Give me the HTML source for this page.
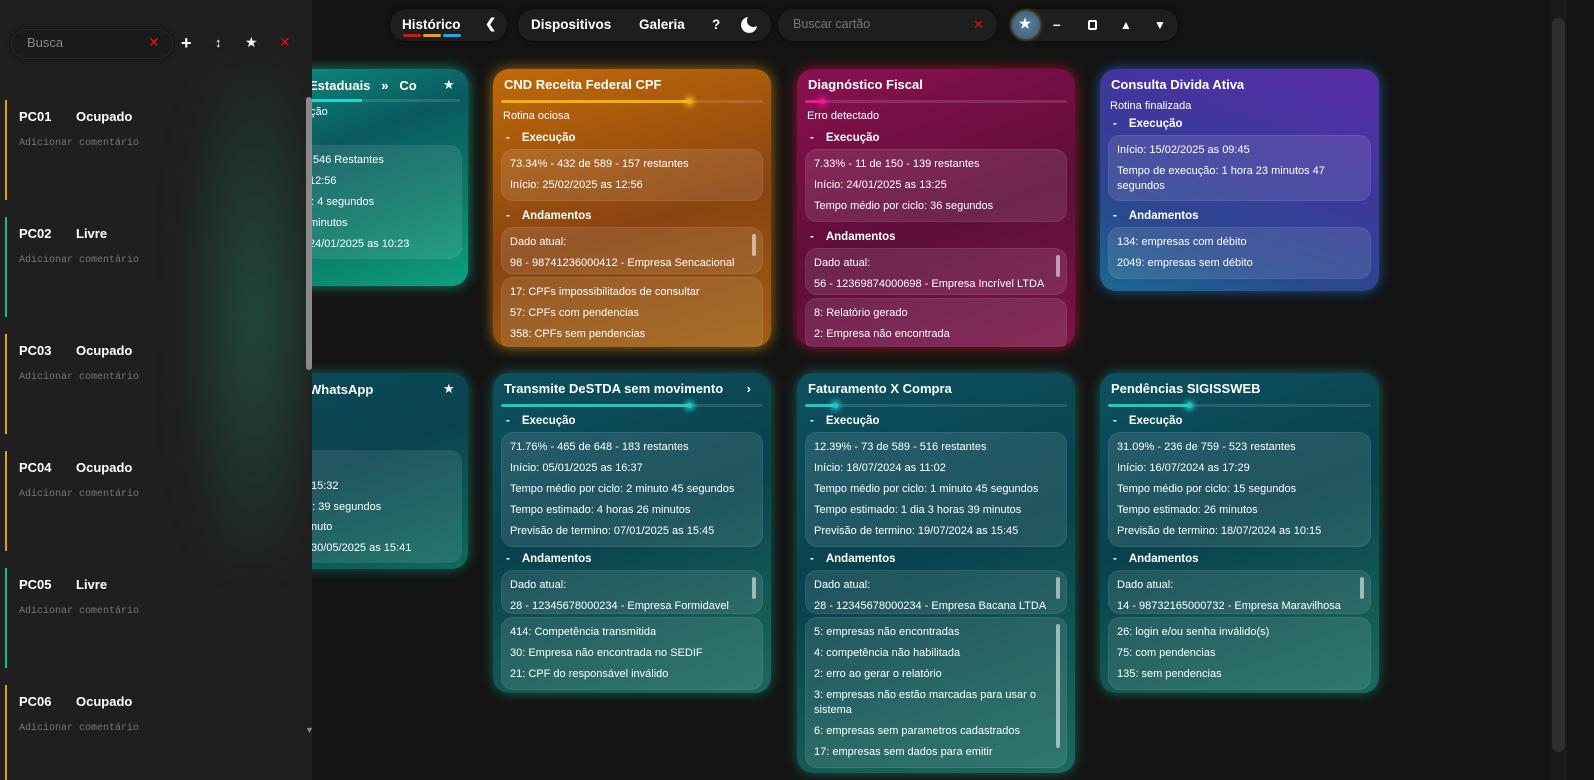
<!DOCTYPE html>
<html><head><meta charset="utf-8"><style>
*{box-sizing:border-box;margin:0;padding:0}
body{width:1594px;height:780px;overflow:hidden;background:#141414;font-family:"Liberation Sans",sans-serif;color:#eee;position:relative}
.card{position:absolute;border-radius:16px;padding:0 8px;overflow:hidden;color:#fff}
.t{height:17px;margin-top:8px;font-size:13px;font-weight:bold;padding-left:3px;white-space:nowrap;position:relative}
.bar{height:3px;margin-top:6px;background:rgba(255,255,255,.12);border-radius:2px;position:relative}
.bar i{position:absolute;left:0;top:0;height:3px;border-radius:2px}
.bar i::after{content:"";position:absolute;right:-2px;top:-1px;width:5px;height:5px;border-radius:50%;background:inherit;box-shadow:0 0 6px 2px currentColor}
.st{font-size:11px;height:14px;line-height:14px;margin-top:6px;padding-left:2px}
.h{font-size:11.5px;font-weight:bold;height:20px;line-height:20px;margin-top:5px;margin-bottom:1px;padding-left:5px}
.h b{margin-right:12px}
.bx{background:rgba(255,255,255,.1);border:1px solid rgba(255,255,255,.07);border-radius:12px;padding:4px 8px;font-size:11px;position:relative;overflow:hidden}
.bx div{line-height:21px;white-space:nowrap}
.bx .w{white-space:normal;line-height:15px;padding:3px 0}
.clip{height:47px;margin-bottom:3px}
.sb{position:absolute;right:6px;top:6px;width:4px;height:22px;background:rgba(255,255,255,.55);border-radius:2px}
.pill{position:absolute;top:9px;height:32px;background:#1e1e1e;border-radius:16px;box-shadow:0 0 6px rgba(0,0,0,.6);font-size:13.5px;font-weight:bold;color:#fff}
.pill span{position:absolute;top:8px}
.side{position:absolute;left:0;top:0;width:312px;height:780px;background:#1f1f1f;overflow:hidden}
.pc{position:absolute;left:5px;width:290px;height:100px}
.pc .l{position:absolute;left:0;top:0;width:2px;height:100%}
.pc .n{position:absolute;left:14px;top:9px;font-size:13px;font-weight:bold;color:#fff}
.pc .s{position:absolute;left:71px;top:9px;font-size:13px;font-weight:bold;color:#fff}
.pc .c{position:absolute;left:14px;top:38px;font-size:10px;font-family:"Liberation Mono",monospace;color:#777}
.abs{position:absolute;white-space:nowrap;font-size:11px}
</style></head><body>

<div class="card" style="left:190px;top:69px;width:278px;height:217px;background:linear-gradient(160deg,#0f9a82,#0a5a60 40%,#0a7a68 70%,#10a07e);box-shadow:0 0 14px rgba(20,220,160,.55)">
 <div class="abs" style="left:119px;top:9px;font-size:13px;font-weight:bold">Estaduais &nbsp; » &nbsp; Co</div>
 <div class="abs" style="left:253px;top:8px;font-size:13px">★</div>
 <div style="position:absolute;left:120px;top:30px;width:150px;height:3px;background:rgba(255,255,255,.12)"><i style="position:absolute;left:0;width:52px;height:3px;background:#1fd8d0"></i></div>
 <div class="abs" style="left:120px;top:37px">ção</div>
 <div style="position:absolute;left:100px;top:76px;width:172px;height:114px;background:rgba(255,255,255,.1);border-radius:12px"></div>
 <div class="abs" style="left:107px;top:85px">2 - 546 Restantes</div>
 <div class="abs" style="left:119px;top:106px">12:56</div>
 <div class="abs" style="left:115px;top:127px">o: 4 segundos</div>
 <div class="abs" style="left:119px;top:148px">minutos</div>
 <div class="abs" style="left:119px;top:169px">24/01/2025 as 10:23</div>
</div>
<div class="card" style="left:190px;top:373px;width:278px;height:196px;background:linear-gradient(160deg,#0c4a58,#0a4450 50%,#0d6a5e);box-shadow:0 0 12px rgba(20,200,160,.45)">
 <div class="abs" style="left:119px;top:9px;font-size:13px;font-weight:bold">WhatsApp</div>
 <div class="abs" style="left:253px;top:8px;font-size:13px">★</div>
 <div style="position:absolute;left:100px;top:77px;width:172px;height:113px;background:rgba(255,255,255,.1);border-radius:12px"></div>
 <div class="abs" style="left:121px;top:107px">15:32</div>
 <div class="abs" style="left:116px;top:128px">o: 39 segundos</div>
 <div class="abs" style="left:121px;top:148px">nuto</div>
 <div class="abs" style="left:121px;top:169px">30/05/2025 as 15:41</div>
</div>

<div class="card" style="left:493px;top:69px;width:278px;height:278px;background:linear-gradient(165deg,#c06a0a,#8a4410 55%,#a06010);box-shadow:0 0 14px rgba(255,170,20,.6)">
 <div class="t">CND Receita Federal CPF</div>
 <div class="bar"><i style="width:72%;background:#f0b010;color:#ffc020"></i></div>
 <div class="st">Rotina ociosa</div>
 <div class="h"><b>-</b>Execução</div>
 <div class="bx"><div>73.34% - 432 de 589 - 157 restantes</div><div>Início: 25/02/2025 as 12:56</div></div>
 <div class="h"><b>-</b>Andamentos</div>
 <div class="bx clip"><span class="sb"></span><div>Dado atual:</div><div>98 - 98741236000412 - Empresa Sencacional</div></div>
 <div class="bx"><div>17: CPFs impossibilitados de consultar</div><div>57: CPFs com pendencias</div><div>358: CPFs sem pendencias</div></div>
</div>

<div class="card" style="left:797px;top:69px;width:278px;height:278px;background:linear-gradient(160deg,#8a1050,#5e0e3a 55%,#7a1448);box-shadow:0 0 14px rgba(240,20,60,.6)">
 <div class="t">Diagnóstico Fiscal</div>
 <div class="bar"><i style="width:7%;background:#f01890;color:#f01890"></i></div>
 <div class="st">Erro detectado</div>
 <div class="h"><b>-</b>Execução</div>
 <div class="bx"><div>7.33% - 11 de 150 - 139 restantes</div><div>Início: 24/01/2025 as 13:25</div><div>Tempo médio por ciclo: 36 segundos</div></div>
 <div class="h"><b>-</b>Andamentos</div>
 <div class="bx clip"><span class="sb"></span><div>Dado atual:</div><div>56 - 12369874000698 - Empresa Incrível LTDA</div></div>
 <div class="bx"><div>8: Relatório gerado</div><div>2: Empresa não encontrada</div></div>
</div>

<div class="card" style="left:1100px;top:69px;width:279px;height:222px;background:linear-gradient(200deg,#5a2aa8,#3a3a9a 45%,#2a4a90 75%,#1a6a90);box-shadow:0 0 12px rgba(40,140,255,.55)">
 <div class="t">Consulta Divida Ativa</div>
 <div class="st" style="margin-top:5px">Rotina finalizada</div>
 <div class="h" style="margin-top:1px"><b>-</b>Execução</div>
 <div class="bx" style="padding:4px 8px 3px"><div>Início: 15/02/2025 as 09:45</div><div class="w">Tempo de execução: 1 hora 23 minutos 47 segundos</div></div>
 <div class="h"><b>-</b>Andamentos</div>
 <div class="bx"><div>134: empresas com débito</div><div>2049: empresas sem débito</div></div>
</div>

<div class="card" style="left:493px;top:373px;width:278px;height:320px;background:linear-gradient(160deg,#0e5060,#08424e 45%,#1a6a5c);box-shadow:0 0 12px rgba(20,200,160,.45)">
 <div class="t">Transmite DeSTDA sem movimento <span style="position:absolute;right:12px">›</span></div>
 <div class="bar"><i style="width:72%;background:#1fc8c0;color:#20e0e0"></i></div>
 <div class="h" style="margin-top:4px"><b>-</b>Execução</div>
 <div class="bx"><div>71.76% - 465 de 648 - 183 restantes</div><div>Início: 05/01/2025 as 16:37</div><div>Tempo médio por ciclo: 2 minuto 45 segundos</div><div>Tempo estimado: 4 horas 26 minutos</div><div>Previsão de termino: 07/01/2025 as 15:45</div></div>
 <div class="h" style="margin-top:2px"><b>-</b>Andamentos</div>
 <div class="bx clip" style="height:44px"><span class="sb"></span><div>Dado atual:</div><div>28 - 12345678000234 - Empresa Formidavel</div></div>
 <div class="bx"><div>414: Competência transmitida</div><div>30: Empresa não encontrada no SEDIF</div><div>21: CPF do responsável inválido</div></div>
</div>

<div class="card" style="left:797px;top:373px;width:278px;height:400px;background:linear-gradient(160deg,#0e5060,#08424e 45%,#1a6a5c);box-shadow:0 0 12px rgba(20,200,160,.45)">
 <div class="t">Faturamento X Compra</div>
 <div class="bar"><i style="width:12%;background:#1fc8c0;color:#20e0e0"></i></div>
 <div class="h" style="margin-top:4px"><b>-</b>Execução</div>
 <div class="bx"><div>12.39% - 73 de 589 - 516 restantes</div><div>Início: 18/07/2024 as 11:02</div><div>Tempo médio por ciclo: 1 minuto 45 segundos</div><div>Tempo estimado: 1 dia 3 horas 39 minutos</div><div>Previsão de termino: 19/07/2024 as 15:45</div></div>
 <div class="h" style="margin-top:2px"><b>-</b>Andamentos</div>
 <div class="bx clip" style="height:44px"><span class="sb"></span><div>Dado atual:</div><div>28 - 12345678000234 - Empresa Bacana LTDA</div></div>
 <div class="bx"><span class="sb" style="height:124px"></span><div>5: empresas não encontradas</div><div>4: competência não habilitada</div><div>2: erro ao gerar o relatório</div><div class="w">3: empresas não estão marcadas para usar o sistema</div><div>6: empresas sem parametros cadastrados</div><div>17: empresas sem dados para emitir</div></div>
</div>

<div class="card" style="left:1100px;top:373px;width:279px;height:320px;background:linear-gradient(160deg,#0e5060,#08424e 45%,#1a6a5c);box-shadow:0 0 12px rgba(20,200,160,.45)">
 <div class="t">Pendências SIGISSWEB</div>
 <div class="bar"><i style="width:31%;background:#1fc8c0;color:#20e0e0"></i></div>
 <div class="h" style="margin-top:4px"><b>-</b>Execução</div>
 <div class="bx"><div>31.09% - 236 de 759 - 523 restantes</div><div>Início: 16/07/2024 as 17:29</div><div>Tempo médio por ciclo: 15 segundos</div><div>Tempo estimado: 26 minutos</div><div>Previsão de termino: 18/07/2024 as 10:15</div></div>
 <div class="h" style="margin-top:2px"><b>-</b>Andamentos</div>
 <div class="bx clip" style="height:44px"><span class="sb"></span><div>Dado atual:</div><div>14 - 98732165000732 - Empresa Maravilhosa</div></div>
 <div class="bx"><div>26: login e/ou senha inválido(s)</div><div>75: com pendencias</div><div>135: sem pendencias</div></div>
</div>

<div class="pill" style="left:390px;width:117px"><span style="left:12px">Histórico</span>
 <i style="position:absolute;left:13px;top:25px;width:18px;height:3px;background:#e01010;border-radius:2px"></i>
 <i style="position:absolute;left:33px;top:25px;width:18px;height:3px;background:#f0a000;border-radius:2px"></i>
 <i style="position:absolute;left:53px;top:25px;width:18px;height:3px;background:#10b0f0;border-radius:2px"></i>
 <span style="left:95px;top:7px">❮</span></div>
<div class="pill" style="left:518px;width:253px"><span style="left:13px">Dispositivos</span><span style="left:121px">Galeria</span><span style="left:194px">?</span>
 <svg style="position:absolute;left:222px;top:7px" width="18" height="18" viewBox="0 0 18 18"><path d="M8 1A8 8 0 1 0 17 10 6.5 6.5 0 0 1 8 1Z" fill="#fff"/></svg></div>
<div class="pill" style="left:778px;width:219px;font-weight:normal"><span style="left:15px;color:#777;font-size:12.5px">Buscar cartão</span><span style="left:195px;color:#e01010;font-size:13px">✕</span></div>
<div class="pill" style="left:1009px;width:169px">
 <i style="position:absolute;left:3px;top:2px;width:28px;height:28px;border-radius:50%;background:radial-gradient(#5a80a0,#3a5a70);box-shadow:0 0 4px #a08040"></i>
 <span style="left:10px;top:7px">★</span><span style="left:44px">–</span>
 <i style="position:absolute;left:79px;top:11px;width:9px;height:10px;border:2px solid #fff;border-radius:2px"></i>
 <span style="left:111px;font-size:12px;top:9px">▲</span><span style="left:145px;font-size:12px;top:9px">▼</span></div>

<div style="position:absolute;left:1550px;top:0;width:17px;height:780px;background:#1a1a1a"></div>
<div style="position:absolute;left:1552px;top:18px;width:13px;height:734px;background:#2e2e2e;border-radius:6px"></div>

<div class="side">
 <div style="position:absolute;left:185px;top:70px;width:125px;height:490px;background:radial-gradient(ellipse at 55% 50%,rgba(35,80,68,.85),rgba(32,60,52,.4) 60%,rgba(31,31,31,0) 85%);filter:blur(14px)"></div>
 <div style="position:absolute;left:11px;top:29px;width:162px;height:30px;border-radius:15px;background:#1a1a1a;border:1px solid #2a2a2a;box-shadow:0 0 5px rgba(0,0,0,.6)"></div>
 <div class="abs" style="left:27px;top:35px;font-size:13px;color:#888">Busca</div>
 <div class="abs" style="left:148px;top:34px;font-size:14px;color:#e01010">✕</div>
 <div class="abs" style="left:181px;top:33px;font-size:18px;font-weight:bold;color:#fff">+</div>
 <div class="abs" style="left:215px;top:35px;font-size:13px;font-weight:bold;color:#fff">↕</div>
 <div class="abs" style="left:245px;top:34px;font-size:14px;color:#fff">★</div>
 <div class="abs" style="left:279px;top:34px;font-size:14px;color:#e01010">✕</div>
 <div class="pc" style="top:100px"><i class="l" style="background:#e8a000"></i><span class="n">PC01</span><span class="s">Ocupado</span><span class="c">Adicionar comentário</span></div>
 <div class="pc" style="top:217px"><i class="l" style="background:#10c080"></i><span class="n">PC02</span><span class="s">Livre</span><span class="c">Adicionar comentário</span></div>
 <div class="pc" style="top:334px"><i class="l" style="background:#e8a000"></i><span class="n">PC03</span><span class="s">Ocupado</span><span class="c">Adicionar comentário</span></div>
 <div class="pc" style="top:451px"><i class="l" style="background:#e8a000"></i><span class="n">PC04</span><span class="s">Ocupado</span><span class="c">Adicionar comentário</span></div>
 <div class="pc" style="top:568px"><i class="l" style="background:#10c080"></i><span class="n">PC05</span><span class="s">Livre</span><span class="c">Adicionar comentário</span></div>
 <div class="pc" style="top:685px"><i class="l" style="background:#e8a000"></i><span class="n">PC06</span><span class="s">Ocupado</span><span class="c">Adicionar comentário</span></div>
 <div style="position:absolute;left:306px;top:97px;width:6px;height:273px;background:#8a8a8a;border-radius:3px"></div>
 <div class="abs" style="left:305px;top:725px;font-size:9px;color:#888">▼</div>
</div>
</body></html>
